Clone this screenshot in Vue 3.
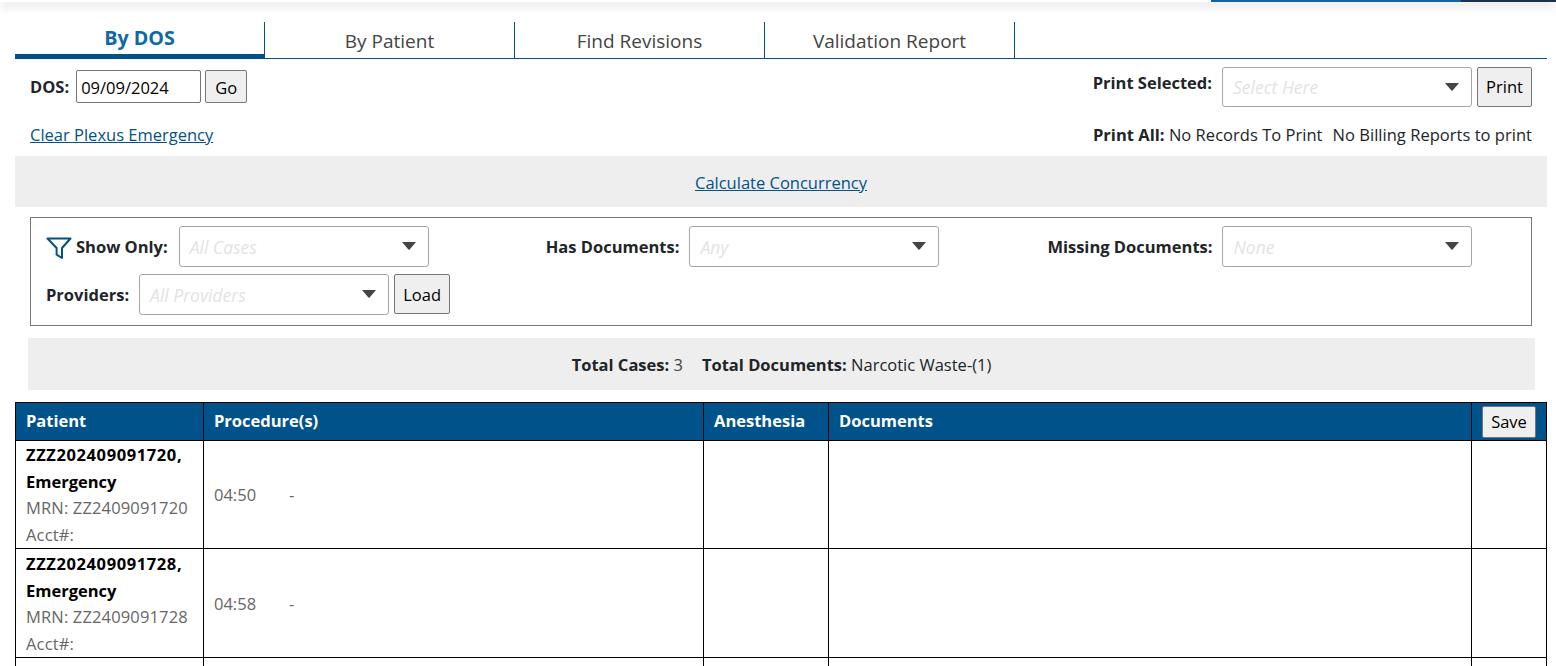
<script setup>
const tabs = ['By DOS', 'By Patient', 'Find Revisions', 'Validation Report']
const patients = [
  { name: 'ZZZ202409091720,', mrn: 'ZZ2409091720', time: '04:50' },
  { name: 'ZZZ202409091728,', mrn: 'ZZ2409091728', time: '04:58' },
]
</script>

<template>
  <div class="page">
    <div class="topbar">
      <div class="strip-blue"></div>
      <div class="strip-navy"></div>
    </div>

    <div class="tabs">
      <div v-for="(t, i) in tabs" :key="t" class="tab" :class="{ active: i === 0 }">{{ t }}</div>
    </div>

    <div class="row-dos">
      <div class="dos-left">
        <b>DOS:</b>
        <input class="date" value="09/09/2024" />
        <button class="btn btn-go">Go</button>
      </div>
      <div class="print-sel">
        <b class="print-label">Print Selected:</b>
        <div class="select">
          <span>Select Here</span>
          <svg class="caret" width="14" height="8" viewBox="0 0 14 8"><path d="M0 0h14L7.6 7.4a.8.8 0 0 1-1.2 0z" /></svg>
        </div>
        <button class="btn btn-print">Print</button>
      </div>
    </div>

    <div class="row-links">
      <a class="link">Clear Plexus Emergency</a>
      <div class="print-all"><b>Print All:</b> No Records To Print<span class="billing">No Billing Reports to print</span></div>
    </div>

    <div class="band"><a class="link">Calculate Concurrency</a></div>

    <div class="filters">
      <div class="filter-row">
        <div class="group show-only">
          <svg class="funnel" width="26" height="23" viewBox="0 0 26 23">
            <path d="M1.5 1.5h23L16 11v10l-5.4-3.4V11z" fill="none" stroke="#00528a" stroke-width="2" stroke-linejoin="round" />
          </svg>
          <b>Show Only:</b>
          <div class="select"><span>All Cases</span><svg class="caret" width="14" height="8" viewBox="0 0 14 8"><path d="M0 0h14L7.6 7.4a.8.8 0 0 1-1.2 0z" /></svg></div>
        </div>
        <div class="group has-docs">
          <b>Has Documents:</b>
          <div class="select"><span>Any</span><svg class="caret" width="14" height="8" viewBox="0 0 14 8"><path d="M0 0h14L7.6 7.4a.8.8 0 0 1-1.2 0z" /></svg></div>
        </div>
        <div class="group missing-docs">
          <b>Missing Documents:</b>
          <div class="select"><span>None</span><svg class="caret" width="14" height="8" viewBox="0 0 14 8"><path d="M0 0h14L7.6 7.4a.8.8 0 0 1-1.2 0z" /></svg></div>
        </div>
      </div>
      <div class="filter-row second">
        <div class="group">
          <b>Providers:</b>
          <div class="select"><span>All Providers</span><svg class="caret" width="14" height="8" viewBox="0 0 14 8"><path d="M0 0h14L7.6 7.4a.8.8 0 0 1-1.2 0z" /></svg></div>
          <button class="btn btn-load">Load</button>
        </div>
      </div>
    </div>

    <div class="totals">
      <span><b>Total Cases:</b> <span class="num">3</span></span>
      <span><b>Total Documents:</b> Narcotic Waste-(1)</span>
    </div>

    <table class="grid">
      <colgroup>
        <col style="width: 188px" />
        <col style="width: 500px" />
        <col style="width: 125px" />
        <col style="width: 643px" />
        <col style="width: 75px" />
      </colgroup>
      <thead>
        <tr>
          <th>Patient</th>
          <th>Procedure(s)</th>
          <th>Anesthesia</th>
          <th>Documents</th>
          <th class="save-cell"><button class="btn btn-save">Save</button></th>
        </tr>
      </thead>
      <tbody>
        <tr v-for="p in patients" :key="p.mrn">
          <td class="patient">
            <div class="name">{{ p.name }}</div>
            <div class="name">Emergency</div>
            <div class="sub">MRN: {{ p.mrn }}</div>
            <div class="sub">Acct#:</div>
          </td>
          <td class="proc"><span class="time">{{ p.time }}</span><span>-</span></td>
          <td></td>
          <td></td>
          <td></td>
        </tr>
        <tr class="last">
          <td></td><td></td><td></td><td></td><td></td>
        </tr>
      </tbody>
    </table>
  </div>
</template>

<style>
html, body { margin: 0; background: #fff; overflow: hidden; }
</style>

<style scoped>
.page {
  font-family: "Open Sans", "Noto Sans", sans-serif;
  font-size: 16.5px;
  color: #212529;
  height: 666px;
  overflow: hidden;
}
b { font-weight: 700; }

.topbar {
  height: 2px;
  margin-bottom: 20px;
  display: flex;
  justify-content: flex-end;
  box-shadow: 0 3px 8px rgba(0,0,0,0.3);
  position: relative;
}
.strip-blue { width: 250px; background: #11659f; }
.strip-navy { width: 95px; background: #1c3054; }

.tabs {
  display: flex;
  margin: 0 9px 0 15px;
  height: 36px;
  border-bottom: 1px solid #00528a;
}
.tab {
  width: 250px;
  box-sizing: border-box;
  border-right: 1px solid #00528a;
  text-align: center;
  font-size: 19px;
  line-height: 38px;
  color: #444;
}
.tab.active {
  color: #0f68a8;
  font-size: 19.7px;
  font-weight: 700;
  line-height: 32px;
  border-bottom: 5px solid #00528a;
  height: 37px;
}

.row-dos {
  display: flex;
  justify-content: space-between;
  padding: 8px 24px 0 30px;
  height: 40px;
}
.dos-left { display: flex; align-items: flex-start; padding-top: 3px; }
.dos-left b { line-height: 33px; margin-right: 7px; }
.date {
  width: 125px;
  height: 33px;
  box-sizing: border-box;
  border: 1px solid #767676;
  border-radius: 2px;
  padding: 1px 4px 0;
  font: inherit;
  color: #000;
  outline: none;
}
.btn {
  box-sizing: border-box;
  border: 1px solid #767676;
  border-radius: 2px;
  background: #efefef;
  font: inherit;
  font-weight: 400;
  color: #000;
  padding: 0;
}
.btn-go { width: 42px; height: 33px; margin-left: 4px; padding-top: 1px; }
.print-sel { display: flex; align-items: flex-start; }
.print-label { margin-right: 10px; line-height: 32px; }
.btn-print { width: 55px; height: 40px; margin-left: 5px; padding-bottom: 1px; }

.select {
  width: 250px;
  height: 41px;
  box-sizing: border-box;
  border: 1px solid #a6a6a6;
  border-radius: 3px;
  display: flex;
  align-items: center;
  justify-content: space-between;
  padding: 0 12px 0 10px;
  font-size: 17.5px;
  font-style: italic;
  color: #e3e3e3;
  background: #fff;
}
.print-sel .select { height: 40px; }
.caret { fill: #444; margin-top: -1px; }

.row-links {
  display: flex;
  justify-content: space-between;
  padding: 17px 24px 0 30px;
  height: 49px;
  box-sizing: border-box;
  line-height: 22px;
}
.print-all { letter-spacing: 0.03px; }
.billing { margin-left: 10px; }
.link { color: #00528a; text-decoration: underline; }

.band {
  margin: 0 9px 0 15px;
  height: 51px;
  box-sizing: border-box;
  padding-top: 2px;
  background: #eee;
  display: flex;
  align-items: center;
  justify-content: center;
}

.filters {
  margin: 10px 24px 0 30px;
  height: 109px;
  box-sizing: border-box;
  border: 1px solid #777;
  padding: 8px 15px 0;
}
.filter-row { display: flex; }
.filter-row.second { margin-top: 7px; }
.group { display: flex; align-items: center; gap: 10px; }
.show-only { gap: 0; }
.show-only b { margin: 0 11px 0 4px; }
.funnel { flex: none; margin-top: 3px; }
.has-docs { margin-left: 117px; }
.missing-docs { margin-left: 108px; }
.btn-load { width: 56px; height: 40px; margin-left: -5px; padding-top: 1px; align-self: flex-start; }

.totals {
  margin: 12px 21px 0 28px;
  height: 52px;
  background: #eee;
  display: flex;
  align-items: center;
  justify-content: center;
  gap: 19px;
}
.num { color: #444; }

.grid {
  margin: 12px 0 0 15px;
  width: 1532px;
  table-layout: fixed;
  border-collapse: collapse;
  border: 1px solid #000;
}
.grid th {
  background: #00528a;
  color: #fff;
  text-align: left;
  font-weight: 700;
  height: 38px;
  padding: 0 10px 3px;
  box-sizing: border-box;
  border: 1px solid #000;
}
.grid th.save-cell { padding: 0; }
.btn-save { width: 54px; height: 32px; margin-left: 10px; display: block; }
.grid td {
  border: 1px solid #000;
  padding: 0 10px;
  height: 107px;
  color: #666;
}
.grid tbody tr:nth-child(2) td { height: 108px; }
.grid tbody tr:nth-child(2) .name:first-child { margin-top: 1px; }
.grid .last td { height: 30px; }
.patient { vertical-align: top; }
.name { font-weight: 700; color: #000; line-height: 27px; letter-spacing: 0.6px; }
.patient .name:nth-child(2) { letter-spacing: 0; }
.sub { line-height: 26.5px; color: #666; letter-spacing: 0.15px; }
.time { display: inline-block; width: 75px; }
</style>
